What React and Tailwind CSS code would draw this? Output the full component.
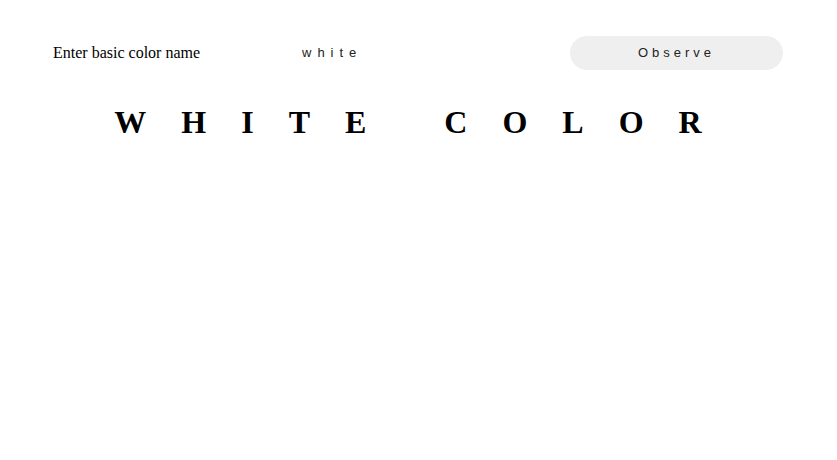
import React, { useState } from 'react';

export default function App() {
  const [color, setColor] = useState('white');
  const [shown, setShown] = useState('white');

  return (
    <div className="min-h-[460px] w-full bg-white">
      {/* 입력 줄 */}
      <div className="flex items-center pl-[53px] pr-[54px] pt-[36px]">
        <label className="w-[249px] font-['Liberation_Serif',serif] text-[16px] text-black">
          Enter basic color name
        </label>
        <input
          value={color}
          onChange={(e) => setColor(e.target.value)}
          className="w-[220px] border-0 bg-transparent font-['Liberation_Sans',Arial,sans-serif] text-[13px] tracking-[6px] text-[#222] outline-none"
        />
        <button
          onClick={() => setShown(color)}
          className="ml-auto h-[34px] w-[213px] rounded-full bg-[#efefef] font-['Liberation_Sans',Arial,sans-serif] text-[13px] tracking-[4px] text-[#222]"
        >
          Observe
        </button>
      </div>

      {/* 색 이름 */}
      <h1 className="mt-[32px] pl-[14px] text-center font-['Liberation_Serif',serif] text-[32px] font-bold uppercase leading-[40px] tracking-[35px] text-black">
        {shown} color
      </h1>
    </div>
  );
}
